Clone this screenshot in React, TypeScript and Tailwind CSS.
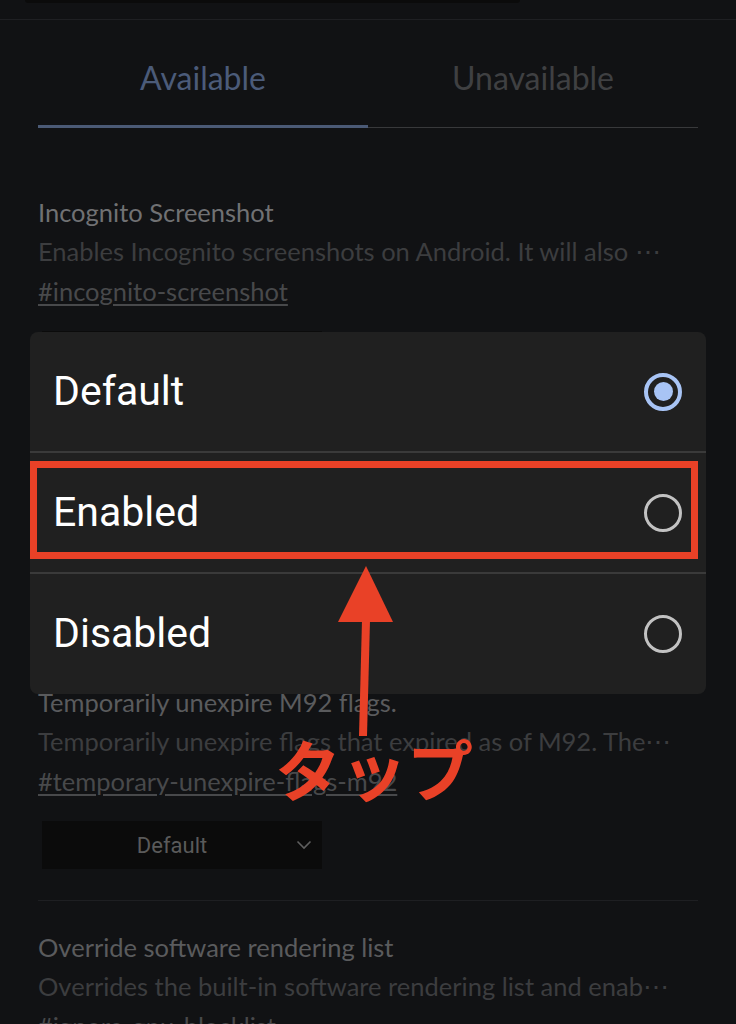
import { useState } from 'react';

type Flag = {
  title: string;
  desc: string;
  tag: string;
  bright?: boolean;
};

const FLAGS: Flag[] = [
  {
    title: 'Incognito Screenshot',
    desc: 'Enables Incognito screenshots on Android. It will also ⋯',
    tag: '#incognito-screenshot',
    bright: true,
  },
  {
    title: 'Temporarily unexpire M91 flags.',
    desc: 'Temporarily unexpire flags that expired as of M91. The⋯',
    tag: '#temporary-unexpire-flags-m91',
  },
  {
    title: 'Temporarily unexpire M92 flags.',
    desc: 'Temporarily unexpire flags that expired as of M92. The⋯',
    tag: '#temporary-unexpire-flags-m92',
  },
  {
    title: 'Override software rendering list',
    desc: 'Overrides the built-in software rendering list and enab⋯',
    tag: '#ignore-gpu-blocklist',
  },
];

const OPTIONS = ['Default', 'Enabled', 'Disabled'];

function Radio({ checked }: { checked: boolean }) {
  return checked ? (
    <span className="w-[38px] h-[38px] rounded-full border-[4px] border-[#a8c4f5] flex items-center justify-center">
      <span className="w-[19px] h-[19px] rounded-full bg-[#a8c4f5]" />
    </span>
  ) : (
    <span className="w-[38px] h-[38px] rounded-full border-[3px] border-[#c2c2c2]" />
  );
}

export default function App() {
  const [tab, setTab] = useState<'available' | 'unavailable'>('available');
  const [choice, setChoice] = useState('Default');

  return (
    <div className="relative w-[736px] h-[1024px] overflow-hidden bg-[#111214] font-['Lato','Noto_Sans',sans-serif]">

      {/* Header (search box edge) */}
      <div className="h-[20px] border-b border-[#1f2023]">
        <div className="ml-[25px] w-[495px] h-[3px] rounded-b-md bg-[#0b0b0b]" />
      </div>

      {/* Tabs */}
      <div className="mx-[38px]">
        <div className="flex h-[105px] pt-[10px]">
          <button
            onClick={() => setTab('available')}
            className={`flex-1 flex items-center justify-center text-[32px] ${
              tab === 'available' ? 'text-[#4b5b79]' : 'text-[#3f4042]'
            }`}
          >
            Available
          </button>
          <button
            onClick={() => setTab('unavailable')}
            className={`flex-1 flex items-center justify-center text-[32px] ${
              tab === 'unavailable' ? 'text-[#4b5b79]' : 'text-[#3f4042]'
            }`}
          >
            Unavailable
          </button>
        </div>
        <div className="flex items-end h-[3px]">
          <div className="flex-1 h-[3px] bg-[#4b5a76]" />
          <div className="flex-1 h-px bg-[#38393b]" />
        </div>
      </div>

      {/* Flags list */}
      <div className="mx-[38px] pt-[64px]">
        {FLAGS.map((f, i) => (
          <div key={f.tag} className={i > 0 ? 'pt-[26px] border-t border-[#1e1f22]' : ''}>
            <div className={`h-[40px] leading-[40px] text-[25.5px] whitespace-nowrap ${f.bright ? 'text-[#707173]' : 'text-[#5a5b5d]'}`}>
              {f.title}
            </div>
            <div className="h-[39px] leading-[39px] text-[25.5px] whitespace-nowrap text-[#3c3d3f]">
              {f.desc}
            </div>
            <div className="h-[40px] leading-[40px] text-[25.5px] whitespace-nowrap text-[#48494b] underline underline-offset-[3px]">
              {f.tag}
            </div>
            <div className="mt-[20px] mb-[31px] ml-[4px] w-[280px] h-[48px] bg-[#0b0b0b] flex items-center">
              <span className="flex-1 text-center pl-[6px] text-[22px] text-[#5a5a5a] font-['Roboto',sans-serif]">
                Default
              </span>
              <svg width="16" height="10" viewBox="0 0 16 10" className="mr-[10px]">
                <path d="M1.5 1.5 L8 8 L14.5 1.5" fill="none" stroke="#5f5f5f" strokeWidth="1.6" />
              </svg>
            </div>
          </div>
        ))}
      </div>

      {/* Option dialog */}
      <div className="absolute left-[30px] top-[332px] w-[676px] rounded-lg bg-[#202020] overflow-hidden font-['Roboto',sans-serif]">
        {OPTIONS.map((o, i) => (
          <div
            key={o}
            onClick={() => setChoice(o)}
            className={`relative flex items-center justify-between pl-[23px] pr-[24px] ${
              i === 0 ? 'h-[119px]' : i === 1 ? 'h-[121px] border-t-2 border-[#3a3a3a]' : 'h-[122px] border-t-2 border-[#3a3a3a]'
            }`}
          >
            <span className="text-[41px] text-white">{o}</span>
            <Radio checked={choice === o} />
            {o === 'Enabled' && (
              <span className="absolute left-0 right-[8px] top-[8px] bottom-[13px] border-[7px] border-[#e94127] pointer-events-none" />
            )}
          </div>
        ))}
      </div>

      {/* Annotation arrow */}
      <svg className="absolute left-[330px] top-[560px]" width="70" height="180" viewBox="0 0 70 180">
        <polygon points="36,6 8,62 63,62" fill="#e94127" />
        <polygon points="32,60 40,60 37,176 29,176" fill="#e94127" />
      </svg>

      {/* Annotation label */}
      <div className="absolute left-[275px] top-[734px] text-[66px] leading-none font-bold text-[#e94127] font-['Noto_Sans_CJK_JP',sans-serif]">
        タップ
      </div>
    </div>
  );
}
